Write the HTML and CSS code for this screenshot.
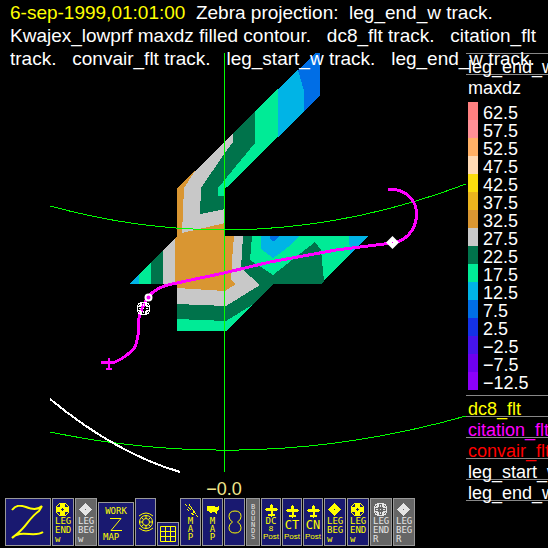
FILE: index.html
```html
<!DOCTYPE html>
<html lang="en">
<head>
    <meta charset="UTF-8">
    <meta name="viewport" content="width=device-width, initial-scale=1.0">
    <title>Zebra</title>
    <link rel="stylesheet" href="styles.css">
</head>
<body>
<!-- shared icons -->
<svg class="defs" width="0" height="0">
    <symbol id="leg-end" viewBox="0 0 13 13">
        <path fill="currentColor" fill-rule="evenodd" d="M3 0h7v1h2v2h1v7h-1v2h-2v1H3v-1H1v-2H0V3h1V1h2zM5 1v3H4v1H1v3h3v1h1v3h3V9h1V8h3V5H9V4H8V1zM2 2v1h1V2zM10 2v1h1V2zM2 10v1h1v-1zM10 10v1h1v-1zM1 3v1h1V3zM11 3v1h1V3zM1 9v1h1V9zM11 9v1h1V9z"/>
        <path fill="currentColor" d="M6 2h1v2H6zM6 9h1v2H6zM2 6h2v1H2zM9 6h2v1H9zM6 6h1v1H6z"/>
    </symbol>
    <symbol id="leg-end-solid" viewBox="0 0 13 13">
        <path fill="currentColor" fill-rule="evenodd" d="M3 0h7v1h1v1h1v1h1v7h-1v1h-1v1h-1v1H3v-1H2v-1H1v-1H0V3h1V2h1V1h1zM3 1v1H2v1H1v1h3V1zM9 1v3h3V3h-1V2h-1V1zM1 9v1h1v1h1v1h1V9zM9 9v3h1v-1h1v-1h1V9zM6 5v1H5v1h1v1h1V7h1V6H7V5z"/>
    </symbol>
    <symbol id="leg-beg" viewBox="0 0 13 13">
        <path fill="currentColor" fill-rule="evenodd" d="M6 0h1v1h1v1h1v1h1v1h1v1h1v1h1v1h-1v1h-1v1h-1v1H9v1H8v1H7v1H6v-1H5v-1H4v-1H3V9H2V8H1V7H0V6h1V5h1V4h1V3h1V2h1V1h1zM6 6v1h1V6z"/>
    </symbol>
    <symbol id="plane" viewBox="0 0 14 13">
        <path fill="currentColor" d="M6 0h2v1h1v3h4v1h1v1h-1v1H9v3h2v2H8v1H6v-1H3v-2h3V7H1V6H0V5h1V4h4V1h1z"/>
    </symbol>
</svg>

<div class="window">
    <h1 class="title"><span class="date">6-sep-1999,01:01:00</span>  Zebra projection:  leg_end_w track.<br>Kwajex_lowprf maxdz filled contour.   dc8_flt track.   citation_flt<br>track.   convair_flt track.   leg_start_w track.   leg_end_w track.</h1>

    <main class="main">
        <svg class="map" viewBox="0 53 466 444" role="img" aria-label="maxdz contour with tracks">
            <!-- filled contour -->
            <g shape-rendering="crispEdges">
                <path class="c75" d="M315 53H320V95L304 111V91L298 70z"/>
                <path class="c125" d="M298 70L304 91V111L278 137V89z"/>
                <path class="c175" d="M278 89V137L226 188H225V196H218V188L255 143V111z"/>
                <path class="c225" d="M255 111V143L218 188V196H225V209L200 214L201 188L224 154L233 142V133z"/>
                <path class="c275" d="M233 133V142L224 154L201 188L200 214L225 209V223L182 233L184 188L195 171z"/>
                <path class="c325" d="M195 171L184 188L182 233L225 223V236H234L232 260L231 280L236 284L225 291L177 288V284H175V238L177 236V188z"/>
                <path class="c275" d="M175 238V284H163V250zM234 236H243L241 268L260 285L226 306L177 304V288L225 291L236 284L231 280L232 260z"/>
                <path class="c225" d="M163 250V284H151V262z"/>
                <path class="c175" d="M151 262V284H139V274z"/>
                <path class="c125" d="M139 274V284H130z"/>
                <path class="c225" d="M243 236H252L250 260L273 275L315 242L321 250L324 281L321 284H273L252 305L226 321L177 319V304L226 306L260 285L241 268z"/>
                <path class="c175" d="M252 236H349L350 254L324 281L321 250L315 242L273 275L250 260zM177 319L226 321L252 305L226 331H177z"/>
                <path class="c125" d="M349 236H368L350 254zM261 236H300Q286 250 273 258L261 249z"/>
                <path class="c75" d="M270 236H279L275 241H272L270 239z"/>
            </g>
            <!-- map grid -->
            <g class="grid" shape-rendering="crispEdges">
                <path d="M50 206Q258 263 466 184"/>
                <path d="M50 432Q258 475 466 416"/>
                <path d="M224.500 53V472"/>
            </g>
            <path class="coast" shape-rendering="crispEdges" d="M50 399C90 432 132 458 180 472"/>
            <!-- citation track -->
            <path class="track" shape-rendering="crispEdges" d="M101 363L115 362Q127 357 135 347Q139 338 139 318Q141 309 148 297Q156 287 172 284L224 273L270 262L336 250L392 243Q405 242 413 229Q419 217 415 205Q408 189 388 189"/>
            <path class="mark" shape-rendering="crispEdges" d="M109 358V370M106 369H112"/>
            <circle class="fix" cx="148.500" cy="297.500" r="3"/>
            <use class="white" shape-rendering="crispEdges" href="#leg-end" x="137" y="302" width="13" height="13"/>
            <path class="diamond" d="M392.500 236L399 242.500L392.500 249L386 242.500z"/>
            <path fill="#f0f" d="M392 242h1v1h-1z"/>
            <text class="lon" x="224" y="495" text-anchor="middle">−0.0</text>
        </svg>

        <nav class="toolbar">
            <button class="btn zebra" aria-label="Zebra">
                <svg width="34" height="34" viewBox="0 0 34 34" fill="none" stroke="currentColor" stroke-width="2">
                    <path d="M1 5C5 0 9 0 15 2C22 5 27 5 31 1L28 6C18 13 16 21 7 28L1 33C9 24 24 33 32 27"/>
                </svg>
            </button>
            <button class="btn leg"><svg class="icon"><use href="#leg-end-solid"/></svg><span>LEG</span><span>END</span><span>w</span></button>
            <button class="btn leg off"><svg class="icon"><use href="#leg-beg"/></svg><span>LEG</span><span>BEG</span><span>w</span></button>
            <button class="btn work"><span>WORK</span>
                <svg width="12" height="13" viewBox="0 0 12 13" fill="none" stroke="currentColor">
                    <path d="M0 .5H11L1 12.500H12"/>
                </svg>
                <span class="left">MAP</span></button>
            <button class="btn" aria-label="Radar">
                <svg width="16" height="20" viewBox="0 0 16 20" fill="none" stroke="currentColor">
                    <circle cx="8" cy="10" r="6.500"/><circle cx="8" cy="10" r="3.500"/>
                    <path d="M8 3V6M8 13V17M1 10H4M12 10H15M3 5L5 7M13 5L11 7M3 15L5 13M13 15L11 13M1 4Q8-2 15 4M1 16Q8 22 15 16"/>
                </svg>
            </button>
            <button class="btn short" aria-label="Grid">
                <svg width="16" height="16" viewBox="0 0 16 16" fill="none" stroke="currentColor">
                    <path d="M.5 .5H15.500V15.500H.5zM5.500 0V16M10.500 0V16M0 5.500H16M0 10.500H16"/>
                </svg>
            </button>
            <button class="btn vert">
                <svg width="14" height="14" viewBox="0 0 14 14" fill="none" stroke="currentColor" shape-rendering="crispEdges">
                    <path d="M1 1L3 3M4 4L7 7M8 6L5 1M9 9L10 10M8 6L12 11M3 6L5 8M7 10L10 12M12 12L14 14"/>
                </svg>
                <span>MAP</span></button>
            <button class="btn vert">
                <svg width="14" height="14" viewBox="0 0 14 14" fill="currentColor" shape-rendering="crispEdges">
                    <path d="M1 3H8L10 4L13 3V6L11 8V11H10L9 9H6L5 11L4 9L1 8z"/>
                </svg>
                <span>MAP</span></button>
            <button class="btn" aria-label="Figure eight">
                <svg width="14" height="24" viewBox="0 0 14 24" fill="none" stroke="currentColor">
                    <path d="M4.500 12Q1 10 1 6.500Q1 1 7 1Q13 1 13 6.500Q13 10 9.500 12Q13 14 13 17.500Q13 23 7 23Q1 23 1 17.500Q1 14 4.500 12z"/>
                </svg>
            </button>
            <button class="btn bounds off"><span>BOUNDS</span></button>
            <button class="btn post"><svg class="icon"><use href="#plane"/></svg><span>DC</span><span class="sub">8</span><span class="sub">Post</span></button>
            <button class="btn post"><svg class="icon"><use href="#plane"/></svg><span class="big">CT</span><span class="sub">Post</span></button>
            <button class="btn post"><svg class="icon"><use href="#plane"/></svg><span class="big">CN</span><span class="sub">Post</span></button>
            <button class="btn leg"><svg class="icon"><use href="#leg-beg"/></svg><span>LEG</span><span>BEG</span><span>w</span></button>
            <button class="btn leg"><svg class="icon"><use href="#leg-end-solid"/></svg><span>LEG</span><span>END</span><span>w</span></button>
            <button class="btn leg off"><svg class="icon"><use href="#leg-end"/></svg><span>LEG</span><span>END</span><span>R</span></button>
            <button class="btn leg off"><svg class="icon"><use href="#leg-beg"/></svg><span>LEG</span><span>BEG</span><span>R</span></button>
        </nav>
    </main>

    <aside class="legend">
        <p class="row first">leg_end_w</p>
        <p class="field">maxdz</p>
        <ul class="scale">
            <li><i class="c625"></i>62.5</li>
            <li><i class="c575"></i>57.5</li>
            <li><i class="c525"></i>52.5</li>
            <li><i class="c475"></i>47.5</li>
            <li><i class="c425"></i>42.5</li>
            <li><i class="c375"></i>37.5</li>
            <li><i class="c325"></i>32.5</li>
            <li><i class="c275"></i>27.5</li>
            <li><i class="c225"></i>22.5</li>
            <li><i class="c175"></i>17.5</li>
            <li><i class="c125"></i>12.5</li>
            <li><i class="c75"></i>7.5</li>
            <li><i class="c25"></i>2.5</li>
            <li><i class="m25"></i>−2.5</li>
            <li><i class="m75"></i>−7.5</li>
            <li><i class="m125"></i>−12.5</li>
        </ul>
        <p class="row first yellow">dc8_flt</p>
        <p class="row magenta">citation_flt</p>
        <p class="row red">convair_flt</p>
        <p class="row">leg_start_w</p>
        <p class="row">leg_end_w</p>
    </aside>
</div>
</body>
</html>
```
FILE: styles.css
```css
*{
    margin: 0;
    padding: 0;
    box-sizing: border-box;
}
body{
    background: #000;
    color: #fff;
    font: 18px/23px "Liberation Sans", Arial, sans-serif;
}
.defs{
    position: absolute;
}
.window{
    position: relative;
    display: grid;
    grid-template-columns: 1fr 82px;
    min-height: 100vh;
    padding: 53px 0 2px;
    overflow: hidden;
}
/* title lies over the top of the map */
.title{
    position: absolute;
    top: 1px;
    left: 10px;
    z-index: 1;
    font-size: 19px;
    font-weight: normal;
    white-space: pre;
}
.date{
    color: #ff0;
}
.main{
    display: flex;
    flex-direction: column;
    justify-content: space-between;
    min-width: 0;
}
.map{
    display: block;
    width: 100%;
    overflow: visible;
}
.grid{
    fill: none;
    stroke: #0f0;
}
.coast{
    fill: none;
    stroke: #fff;
    stroke-width: 2;
}
.track{
    fill: none;
    stroke: #f0f;
    stroke-width: 3;
}
.mark{
    stroke: #f0f;
    stroke-width: 2;
}
.fix{
    fill: #f0f;
    stroke: #fff;
    stroke-width: 2;
}
.white{
    color: #fff;
}
.diamond{
    fill: #fff;
}
.lon{
    fill: #f0e68c;
    font-size: 18px;
}

/* legend */
.legend{
    overflow: hidden;
    white-space: nowrap;
}
.row{
    height: 21px;
    padding-left: 2px;
    line-height: 26px;
    border-bottom: 1px solid #888;
}
.row.first{
    height: 22px;
    border-top: 1px solid #888;
}
.field{
    padding-left: 2px;
    line-height: 27px;
}
.scale{
    margin-bottom: 5px;
    padding-left: 2px;
    list-style: none;
}
.scale li{
    display: flex;
    gap: 5px;
    height: 18px;
    line-height: 22px;
}
.scale i{
    width: 10px;
    height: 18px;
}
.yellow{ color: #ff0; }
.magenta{ color: #f0f; }
.red{ color: #f00; }

.c625{ background: #ff8080; }
.c575{ background: #ff9096; }
.c525{ background: #ffb066; }
.c475{ background: #ffdab4; }
.c425{ background: #fadc0f; }
.c375{ background: #ebb41e; }
.c325{ background: #d99632; fill: #d99632; }
.c275{ background: #c8c8c8; fill: #c8c8c8; }
.c225{ background: #00734b; fill: #00734b; }
.c175{ background: #00eb96; fill: #00eb96; }
.c125{ background: #00b4e6; fill: #00b4e6; }
.c75{ background: #006ee6; fill: #006ee6; }
.c25{ background: #1432e6; }
.m25{ background: #4614eb; }
.m75{ background: #6e00f0; }
.m125{ background: #8c00fa; }

/* toolbar */
.toolbar{
    display: flex;
    align-items: flex-end;
    gap: 1px;
    padding-left: 5px;
}
.btn{
    display: flex;
    flex-direction: column;
    align-items: center;
    justify-content: center;
    flex: none;
    width: 21px;
    height: 48px;
    border: 1px solid #999;
    background: #191970;
    color: #ff0;
    font: 9px/9px "DejaVu Sans Mono", monospace;
    cursor: pointer;
}
.off{
    background: #666;
    color: #e5e5e5;
}
.icon{
    width: 13px;
    height: 13px;
    flex: none;
    shape-rendering: crispEdges;
}
.zebra{
    width: 46px;
}
.leg{
    width: 22px;
    align-items: flex-start;
    padding: 2px 0 0 2px;
}
.leg .icon{
    margin: 0 0 1px 1px;
}
.work{
    width: 36px;
    height: 44px;
    gap: 2px;
}
.left{
    align-self: flex-start;
    padding-left: 4px;
}
.short{
    width: 22px;
    height: 24px;
}
/* one letter per line */
.vert span,
.bounds span{
    width: 1ch;
    word-break: break-all;
}
.vert{
    font-size: 9px;
    line-height: 8px;
}
.bounds{
    width: 14px;
    font-size: 7px;
    line-height: 6px;
}
.post{
    width: 20px;
    padding-top: 1px;
    line-height: 8px;
}
.big{
    font-size: 12px;
    line-height: 15px;
}
.sub{
    font: 8px/8px "Liberation Sans", Arial, sans-serif;
}
```
